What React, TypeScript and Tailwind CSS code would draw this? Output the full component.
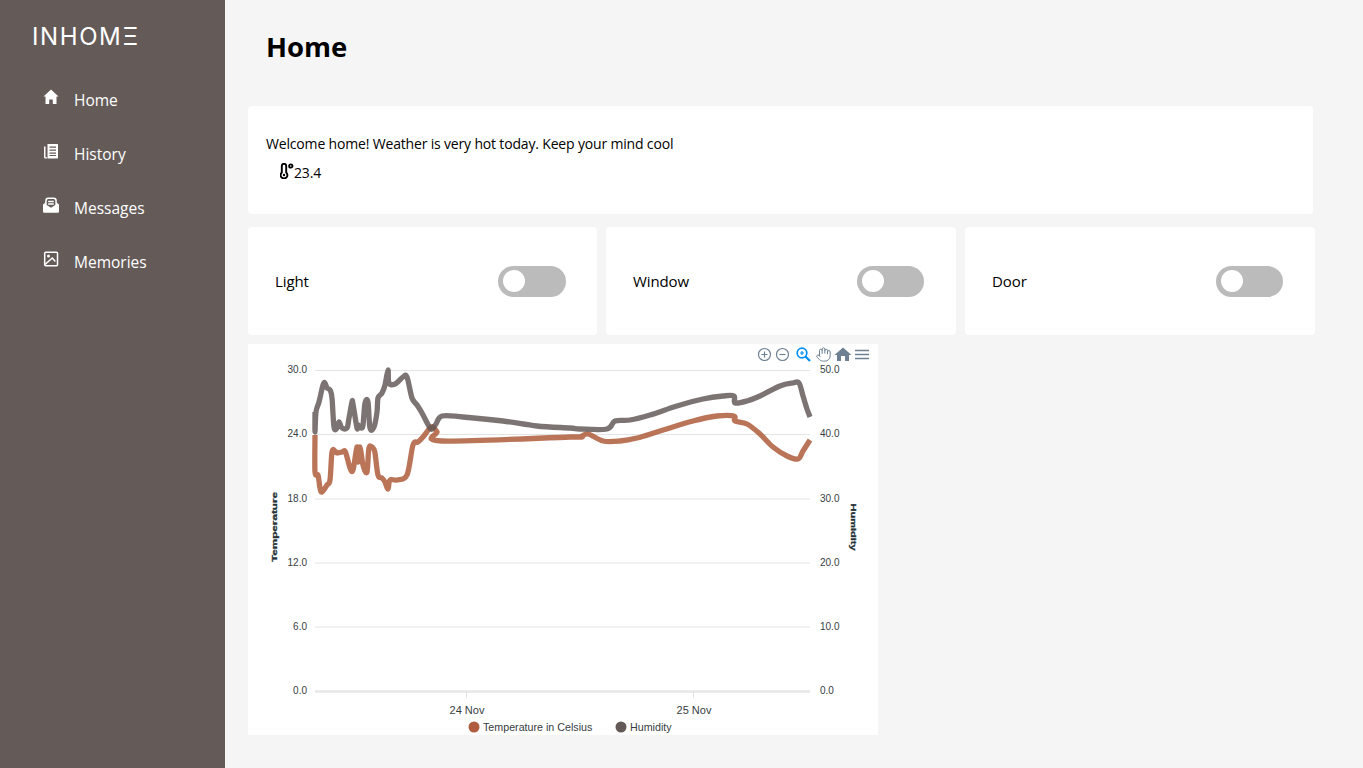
import { Hand } from "lucide-react";

const UI_FONT = "font-['Open_Sans','Noto_Sans',sans-serif]";

const navItems = [
  { label: "Home", icon: <HomeIcon /> },
  { label: "History", icon: <HistoryIcon /> },
  { label: "Messages", icon: <MessagesIcon /> },
  { label: "Memories", icon: <MemoriesIcon /> },
];

const devices = [
  { name: "Light", padding: "pr-[31.500px]" },
  { name: "Window", padding: "pr-[32px]" },
  { name: "Door", padding: "pr-[32px]" },
];

type Pt = [number, number];

// chart traces, in the same coordinates as the page (see the svg viewBox)
const humidity: Pt[] = [
  [315, 412], [315, 432], [316, 412], [319, 402], [323, 385], [325, 383], [327, 388], [330, 390], [332, 398], [334, 427],
  [337, 428], [339, 422], [342, 428], [347, 428], [349, 418], [352, 402], [353, 404], [357, 428], [358, 425], [361, 428],
  [363, 425], [365, 403], [368, 402], [370, 428], [374, 427], [377, 412], [378, 398], [382, 393], [385, 385], [388, 370],
  [389, 383], [395, 384], [403, 377], [407, 377], [412, 398], [417, 405], [422, 413], [430, 428], [433, 428], [436, 424],
  [442, 416], [463, 417], [503, 421], [537, 426], [570, 428], [580, 429], [607, 429], [615, 421], [630, 420], [650, 415],
  [677, 406], [703, 399], [723, 396], [734, 396], [735, 403], [747, 401], [760, 396], [780, 386], [793, 383], [799, 383],
  [803, 396], [807, 409], [810, 417],
];
const temperature: Pt[] = [
  [315, 435], [315, 472], [318, 475], [320, 488], [322, 492], [327, 485], [330, 480], [332, 452], [335, 451], [337, 453],
  [342, 452], [345, 451], [347, 457], [350, 468], [353, 470], [357, 447], [358, 462], [360, 447], [363, 465], [367, 472],
  [369, 448], [373, 448], [375, 453], [378, 475], [382, 478], [385, 482], [388, 489], [390, 480], [397, 480], [407, 475],
  [413, 445], [418, 442], [423, 437], [430, 428], [433, 427], [437, 432], [442, 441], [570, 437], [580, 437], [588, 434],
  [603, 441], [620, 441], [637, 438], [660, 431], [693, 421], [717, 416], [734, 416], [735, 421], [747, 424], [760, 434],
  [773, 447], [787, 456], [798, 459], [803, 451], [810, 440],
];

// catmull-rom through the points, apexcharts draws its lines smooth
function smooth(pts: Pt[]) {
  let d = `M${pts[0][0]} ${pts[0][1]}`;
  for (let i = 0; i < pts.length - 1; i++) {
    const p0 = pts[Math.max(i - 1, 0)];
    const p1 = pts[i];
    const p2 = pts[i + 1];
    const p3 = pts[Math.min(i + 2, pts.length - 1)];
    const c1x = p1[0] + (p2[0] - p0[0]) / 6;
    const c1y = p1[1] + (p2[1] - p0[1]) / 6;
    const c2x = p2[0] - (p3[0] - p1[0]) / 6;
    const c2y = p2[1] - (p3[1] - p1[1]) / 6;
    d += ` C${c1x} ${c1y} ${c2x} ${c2y} ${p2[0]} ${p2[1]}`;
  }
  return d;
}

const gridLines = [370.5, 434.5, 499, 563, 627];
const leftTicks = [
  { y: 373, v: "30.0" },
  { y: 437, v: "24.0" },
  { y: 502, v: "18.0" },
  { y: 566, v: "12.0" },
  { y: 630, v: "6.0" },
  { y: 694, v: "0.0" },
];
const rightTicks = [
  { y: 373, v: "50.0" },
  { y: 437, v: "40.0" },
  { y: 502, v: "30.0" },
  { y: 566, v: "20.0" },
  { y: 630, v: "10.0" },
  { y: 694, v: "0.0" },
];

function HomeIcon() {
  return (
    <svg viewBox="0 0 16 16" className="w-4 h-4" fill="currentColor">
      <path d="M8 .5 15.500 7.500H13.500V15H9.800V10.500H6.200V15H2.500V7.500H.5z" />
    </svg>
  );
}

function HistoryIcon() {
  return (
    <svg viewBox="0 0 16 16" className="w-4 h-4" fill="currentColor">
      <path d="M1 3.500h1.500v10.700H4V15.500H2.200A1.200 1.200 0 0 1 1 14.300z" />
      <path d="M4.500 1h9.800A.8.8 0 0 1 15 1.800v12.900a.8.8 0 0 1-.8.8H4.500z" />
      <path d="M6.500 3.500h6.500v1.200H6.500zM6.500 6.500h6.500v1.200H6.500zM6.500 9.500h6.500v1.200H6.500zM6.500 12h6.500v1H6.500z" fill="#645b59" />
    </svg>
  );
}

function MessagesIcon() {
  return (
    <svg viewBox="0 0 16 16" className="w-4 h-4" fill="currentColor">
      <path d="M0 7.500 2.200 5.800V3.500A3 3 0 0 1 5.200.5h5.600a3 3 0 0 1 3 3v2.300L16 7.500v7a1.300 1.300 0 0 1-1.300 1.300H1.300A1.300 1.300 0 0 1 0 14.500z" />
      <path d="M3.700 3.800A1.800 1.800 0 0 1 5.500 2h5a1.800 1.800 0 0 1 1.800 1.800V8L8 10.800 3.700 8z" fill="#645b59" />
      <path d="M5.200 3.800h5.600v1.400H5.200zM5.200 6.300h5.600v1.400H5.200z" />
    </svg>
  );
}

function MemoriesIcon() {
  return (
    <svg viewBox="0 0 16 16" className="w-4 h-4" fill="none" stroke="currentColor">
      <rect x="1.700" y="1.200" width="12.800" height="13.600" rx="1" strokeWidth="1.500" />
      <circle cx="5.500" cy="5" r="1.500" fill="currentColor" stroke="none" />
      <path d="M2 13.500 9.300 7l3 3.500" strokeWidth="1.500" />
    </svg>
  );
}

function ThermoIcon() {
  return (
    <svg viewBox="0 0 14 16" className="w-[14px] h-4 shrink-0" fill="none" stroke="#000">
      <path d="M1.800 9.500V3a2.200 2.200 0 0 1 4.400 0v6.500a3.400 3.400 0 1 1-4.400 0z" strokeWidth="1.900" />
      <circle cx="4" cy="12" r="1.200" fill="#000" stroke="none" />
      <circle cx="10.800" cy="3" r="1.700" strokeWidth="1.800" />
    </svg>
  );
}

function Toggle() {
  return (
    <button className="flex items-center w-[67.5px] h-[31px] rounded-full bg-[#bbbbbb] pl-[5px]">
      <span className="block w-[22px] h-[22px] rounded-full bg-white" />
    </button>
  );
}

function Chart() {
  return (
    <svg viewBox="248 344 630 391" className="block w-[630px] h-[391px] font-['Liberation_Sans',sans-serif]">
      {gridLines.map((y) => (
        <line key={y} x1="315" x2="810" y1={y} y2={y} stroke="#e4e4e4" strokeWidth="1" />
      ))}
      <line x1="315" x2="810" y1="691.500" y2="691.500" stroke="#e7e7e7" strokeWidth="2.500" />
      <line x1="466.500" x2="466.500" y1="692" y2="698" stroke="#e0e0e0" />
      <line x1="693.500" x2="693.500" y1="692" y2="698" stroke="#e0e0e0" />

      <path d={smooth(temperature)} fill="none" stroke="#a9532f" strokeOpacity="0.8" strokeWidth="5.300" strokeLinejoin="round" />
      <path d={smooth(humidity)} fill="none" stroke="#5f5553" strokeOpacity="0.82" strokeWidth="5.300" strokeLinejoin="round" />

      {leftTicks.map((t) => (
        <text key={t.v} x="307" y={t.y} textAnchor="end" fontSize="10" fill="#373d3f">
          {t.v}
        </text>
      ))}
      {rightTicks.map((t) => (
        <text key={t.v} x="820" y={t.y} fontSize="10" fill="#373d3f">
          {t.v}
        </text>
      ))}

      <text
        transform="translate(277 527) rotate(-90)"
        textAnchor="middle"
        fontSize="8"
        fontWeight="900"
        textLength="70"
        lengthAdjust="spacingAndGlyphs"
        fill="#263238"
        stroke="#263238"
        strokeWidth="0.300"
      >
        Temperature
      </text>
      <text
        transform="translate(851 527) rotate(90)"
        textAnchor="middle"
        fontSize="8"
        fontWeight="900"
        textLength="47"
        lengthAdjust="spacingAndGlyphs"
        fill="#263238"
        stroke="#263238"
        strokeWidth="0.300"
      >
        Humidity
      </text>

      <text x="467" y="714" textAnchor="middle" fontSize="11" fill="#373d3f">24 Nov</text>
      <text x="694" y="714" textAnchor="middle" fontSize="11" fill="#373d3f">25 Nov</text>

      <circle cx="474" cy="727" r="5.500" fill="#b05c3f" />
      <text x="483" y="731" fontSize="10.700" fill="#373d3f">Temperature in Celsius</text>
      <circle cx="621" cy="727" r="5.500" fill="#635a58" />
      <text x="630" y="731" fontSize="10.700" fill="#373d3f">Humidity</text>

      {/* toolbar */}
      <g fill="none" stroke="#6e8192" strokeWidth="1.200">
        <circle cx="764.500" cy="354.500" r="6" />
        <path d="M761.500 354.500h6M764.500 351.500v6" />
        <circle cx="782.500" cy="354.500" r="6" />
        <path d="M779.500 354.500h6" />
      </g>
      <g fill="none" stroke="#008ffb">
        <circle cx="802" cy="353" r="4.800" strokeWidth="1.700" />
        <path d="M805.500 356.500l4.500 4.500" strokeWidth="2.200" />
        <path d="M800 353h4M802 351v4" strokeWidth="1.200" />
      </g>
      <Hand x="815.500" y="346.500" width="16" height="16" color="#6e8192" strokeWidth={1.500} />
      <path d="M841 361v-5h4v5h4v-6h2.500l-8.500-7.500-8.500 7.500h2.500v6z" fill="#6e8192" />
      <path d="M855 350.500h14M855 354.500h14M855 358.500h14" stroke="#6e8192" strokeWidth="1.500" />
    </svg>
  );
}

export default function App() {
  return (
    <div className={`flex h-screen w-full overflow-hidden bg-[#f5f5f5] text-black ${UI_FONT}`}>
      <aside className="w-[225px] shrink-0 bg-[#645b59] text-white">
        <div className="pl-[32px] pt-[22px] h-[73px] font-['Inter',sans-serif] text-[24px] leading-[30px] tracking-[1.6px]">
          INHOMΞ
        </div>
        <nav className="flex flex-col">
          {navItems.map((item) => (
            <a key={item.label} className="flex items-center h-[54px] pl-[43px] pt-px text-[15.5px]">
              <span className="w-[31px] -mt-[7px]">{item.icon}</span>
              {item.label}
            </a>
          ))}
        </nav>
      </aside>

      <main className="flex-1 pl-[23px] pr-[48px]">
        <h1 className="pl-[18px] pt-[28px] h-[106px] text-[27.500px] leading-[38px] font-bold">Home</h1>

        <section className="bg-white rounded h-[108px] w-[1065px] pl-[18px] pt-[27px] text-sm">
          <p className="leading-[22px] tracking-[-0.17px]">Welcome home! Weather is very hot today. Keep your mind cool</p>
          <p className="flex items-start pl-[14px] mt-[8px] leading-[20px] tracking-[-0.17px]">
            <ThermoIcon />
            23.4
          </p>
        </section>

        <div className="grid grid-cols-[349px_350px_350px] gap-[9px] mt-[13px]">
          {devices.map((d) => (
            <div key={d.name} className={`bg-white rounded h-[108px] flex items-center justify-between pl-[27px] ${d.padding}`}>
              <span className="text-[15px] tracking-[-0.1px]">{d.name}</span>
              <Toggle />
            </div>
          ))}
        </div>

        <div className="bg-white w-[630px] h-[391px] mt-[9px]">
          <Chart />
        </div>
      </main>
    </div>
  );
}
